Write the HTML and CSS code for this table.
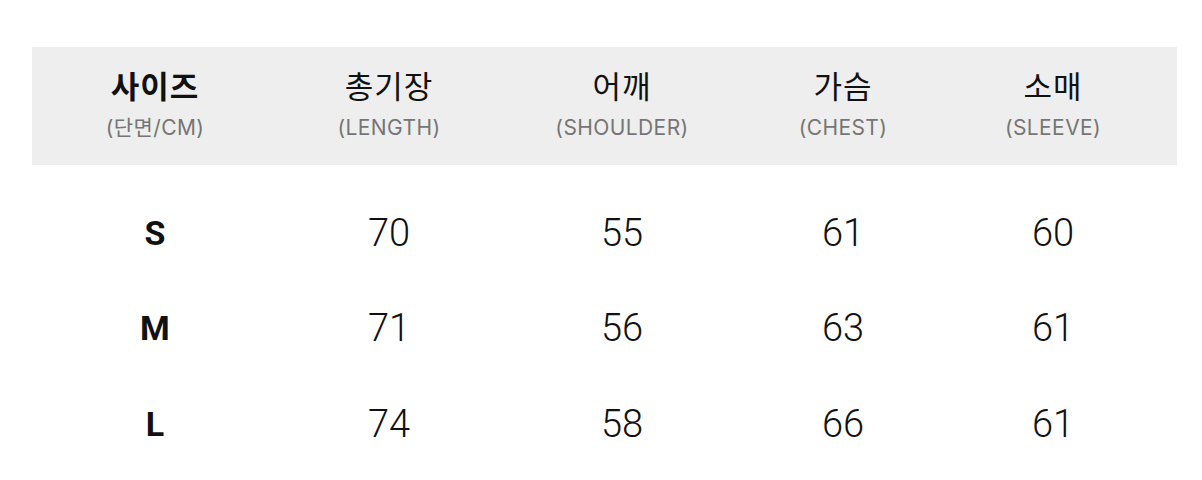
FILE: index.html
```html
<!DOCTYPE html>
<html lang="ko">
<head>
<meta charset="utf-8">
<link rel="stylesheet" href="styles.css">
</head>
<body>
<div class="size-table">
  <div class="row head">
    <div class="cell"><div class="title strong">사이즈</div><div class="sub">(단면/CM)</div></div>
    <div class="cell"><div class="title">총기장</div><div class="sub">(LENGTH)</div></div>
    <div class="cell"><div class="title">어깨</div><div class="sub">(SHOULDER)</div></div>
    <div class="cell"><div class="title">가슴</div><div class="sub">(CHEST)</div></div>
    <div class="cell"><div class="title">소매</div><div class="sub">(SLEEVE)</div></div>
  </div>
  <div class="body">
    <div class="row data">
      <div class="cell size">S</div><div class="cell">70</div><div class="cell">55</div><div class="cell">61</div><div class="cell">60</div>
    </div>
    <div class="row data">
      <div class="cell size">M</div><div class="cell">71</div><div class="cell">56</div><div class="cell">63</div><div class="cell">61</div>
    </div>
    <div class="row data">
      <div class="cell size">L</div><div class="cell">74</div><div class="cell">58</div><div class="cell">66</div><div class="cell">61</div>
    </div>
  </div>
</div>
</body>
</html>
```
FILE: styles.css
```css
html, body {
  margin: 0;
  padding: 0;
  background: #fff;
}
body {
  font-family: "Noto Sans CJK KR", "Noto Sans", sans-serif;
  color: #111;
}
.size-table {
  padding: 47px 25px 0 32px;
}
.row {
  display: grid;
  grid-template-columns: 246px 222px 244px 198px 222px;
}
.head {
  background: #eeeeee;
  height: 118px;
  width: 1145px;
}
.head .cell {
  display: flex;
  flex-direction: column;
  align-items: center;
  justify-content: center;
  gap: 11px;
  padding-bottom: 3px;
}
.title {
  font-size: 31px;
  line-height: 36px;
  font-weight: 400;
  color: #111;
  letter-spacing: 1px;
}
.title.strong {
  font-weight: 700;
}
.sub {
  font-family: "Inter", "Noto Sans CJK KR", sans-serif;
  font-size: 21px;
  line-height: 28px;
  color: #757575;
  letter-spacing: 0.4px;
}
.body {
  padding-top: 20px;
}
.data {
  height: 95.5px;
}
.data .cell {
  display: flex;
  align-items: center;
  justify-content: center;
  font-family: "Roboto", sans-serif;
  font-weight: 300;
  font-size: 38px;
  color: #111;
}
.data .cell.size {
  font-family: "Roboto", sans-serif;
  font-weight: 700;
  font-size: 34px;
}
```
